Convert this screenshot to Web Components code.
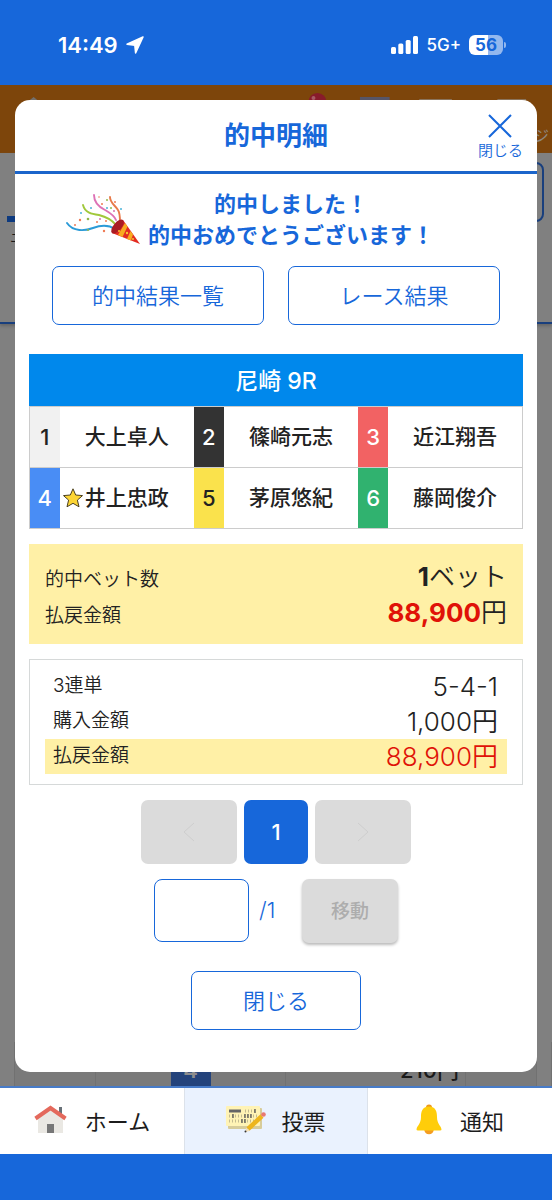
<!DOCTYPE html>
<html lang="ja">
<head>
<meta charset="utf-8">
<meta name="viewport" content="width=device-width, initial-scale=1">
<title>的中明細</title>
<style>
  :root {
    --blue: #1767da;
    --line: #d6d9d9;
    --yellow: #fff0a6;
    --disabled: #dbdbdb;
  }
  body {
    margin: 0;
    min-height: 100vh;
    display: flex;
    flex-direction: column;
    font-family: Inter, "Noto Sans CJK JP", sans-serif;
    color: #222;
    background: var(--blue);
  }
  main { flex: 1; display: grid; grid-template-columns: minmax(0, 1fr); }
  main > * { grid-area: 1 / 1; }
</style>
</head>
<body>
  <status-bar time="14:49" network="5G+" battery="56"></status-bar>
  <main>
    <page-backdrop></page-backdrop>
    <app-dialog heading="的中明細">
      <hit-message>
        <span>的中しました！</span>
        <span>的中おめでとうございます！</span>
      </hit-message>
      <button-row>
        <outline-button>的中結果一覧</outline-button>
        <outline-button>レース結果</outline-button>
      </button-row>
      <race-table heading="尼崎 9R" racers="大上卓人,篠崎元志,近江翔吾,井上忠政,茅原悠紀,藤岡俊介" star="4"></race-table>
      <hit-summary>
        <amount-row label="的中ベット数" amount="1" unit="ベット" strong></amount-row>
        <amount-row label="払戻金額" amount="88,900" unit="円" strong red></amount-row>
      </hit-summary>
      <bet-detail>
        <amount-row label="3連単" amount="5-4-1" inset></amount-row>
        <amount-row label="購入金額" amount="1,000" unit="円" inset></amount-row>
        <amount-row label="払戻金額" amount="88,900" unit="円" inset marked></amount-row>
      </bet-detail>
      <page-navigator page="1" total="1"></page-navigator>
      <outline-button slot="footer">閉じる</outline-button>
    </app-dialog>
  </main>
  <tab-bar></tab-bar>

<script>
const define = (name, render) => customElements.define(name, class extends HTMLElement {
  connectedCallback() {
    if (this.shadowRoot) return;
    this.attachShadow({ mode: "open" }).innerHTML = render(this);
  }
});
const attr = (el, name) => el.getAttribute(name) || "";

define("status-bar", el => `
  <style>
    :host { display: flex; box-sizing: border-box; height: 85px; padding: 5px 46px 0 58px; align-items: center;
      justify-content: space-between; background: var(--blue); color: #fff; }
    div { display: flex; align-items: center; }
    .left { gap: 8px; font-size: 22px; font-weight: 600; }
    .right { gap: 8px; font-size: 17px; font-weight: 500; }
    .battery { gap: 1px; }
    .cell { width: 34px; height: 20px; border-radius: 6px; justify-content: center; color: var(--blue);
      font-size: 17px; font-weight: 700; background: linear-gradient(90deg, #fff 56%, #94b8ee 56%); }
    .nub { width: 2px; height: 6px; border-radius: 0 2px 2px 0; background: #94b8ee; }
  </style>
  <div class="left"><span>${attr(el, "time")}</span>
    <svg width="18" height="18" viewBox="0 0 18 18" fill="#fff" stroke="#fff" stroke-width="1.500" stroke-linejoin="round"><path d="M17 1 1 8.200 8.800 9.200 9.600 17Z"/></svg>
  </div>
  <div class="right">
    <svg width="27" height="18" viewBox="0 0 27 18" fill="#fff"><rect y="11" width="5" height="7" rx="1.500"/><rect x="7.300" y="7.500" width="5" height="10.500" rx="1.500"/><rect x="14.700" y="4" width="5" height="14" rx="1.500"/><rect x="22" width="5" height="18" rx="1.500"/></svg>
    <span>${attr(el, "network")}</span>
    <div class="battery"><div class="cell">${attr(el, "battery")}</div><div class="nub"></div></div>
  </div>`);

define("page-backdrop", () => `
  <style>
    :host { display: flex; flex-direction: column; overflow: hidden; background: #808080; color: #1a1a1a; }
    header { display: flex; height: 68px; background: #7d450b; justify-content: space-between; }
    .my { align-self: flex-end; font-size: 15px; line-height: 34px; color: #8f8880; padding-right: 3px; }
    section { height: 169px; border-bottom: 2px solid #193f7d; box-shadow: 0 2px 3px #666; }
    .top { display: flex; justify-content: space-between; align-items: flex-end; padding: 9px 8px 0 7px; }
    .bar { width: 80px; height: 6px; background: #0d3a7f; }
    .box { width: 110px; height: 56px; border: 2px solid #193f7d; border-radius: 8px; }
    p { margin: 0; padding-left: 10px; font-size: 13px; line-height: 30px; }
    .grow { flex: 1; }
    .row { display: grid; grid-template-columns: 15px 81px 190px 180px 71px 1fr; height: 44px; font-size: 22px; line-height: 56px; background: #7a7a7a; }
    .row > * { border-right: 1px solid #717171; }
    .row > :first-child, .row > :last-child { background: #808080; }
    .num { display: flex; justify-content: center; }
    .num b { width: 40px; background: #24437b; color: #8d8d8d; text-align: center; font-weight: 600; }
    .price { text-align: right; padding-right: 6px; font-weight: 500; }
  </style>
  <header>
    <svg width="540" height="16" viewBox="0 0 540 16"><path d="M29 16l5-4 5 4z" fill="#74706c"/><circle cx="321" cy="17" r="9" fill="#881b2b"/><circle cx="317" cy="13" r="2" fill="#a65a64"/><path d="M364 12h30v4h-30z" fill="#565568"/><path d="M424 14h33v2h-33zM503 14h29v2h-29z" fill="#8a745c"/></svg>
    <span class="my">ジ</span>
  </header>
  <section><div class="top"><div class="bar"></div><div class="box"></div></div><p>ニ</p></section>
  <div class="grow"></div>
  <div class="row"><span></span><span></span><span class="num"><b>4</b></span><span class="price">210円</span><span></span><span></span></div>`);

define("app-dialog", el => `
  <style>
    :host { display: flex; flex-direction: column; margin: 15px 15px 14px; border-radius: 15px; background: #fff; position: relative; }
    header { display: grid; grid-template-columns: 1fr auto 1fr; align-items: center; height: 71px; border-bottom: 3px solid #1b65cb; color: var(--blue); }
    h1 { grid-column: 2; margin: 0; font-size: 26px; font-weight: 700; line-height: 40px; }
    button { justify-self: end; display: flex; flex-direction: column; align-items: center; gap: 2px; margin: 2px 14px 0 0; padding: 0;
      border: 0; background: none; color: inherit; font: 350 15px/20px "Noto Sans CJK JP", sans-serif; }
    .body { display: flex; flex-direction: column; gap: 15px; padding: 15px 14px 28px; }
    footer { display: flex; justify-content: center; padding-bottom: 42px; }
    footer ::slotted(*) { width: 170px; }
  </style>
  <header><h1 id="t">${attr(el, "heading")}</h1>
    <button type="button"><svg width="24" height="24" viewBox="0 0 24 24" fill="none" stroke="currentColor" stroke-width="2"><path d="M1 1 23 23M23 1 1 23"/></svg>閉じる</button>
  </header>
  <div class="body" role="dialog" aria-labelledby="t"><slot></slot></div>
  <footer><slot name="footer"></slot></footer>`);

define("hit-message", () => `
  <style>
    :host { display: flex; justify-content: center; gap: 4px; padding-right: 52px; color: var(--blue); }
    p { display: flex; flex-direction: column; align-items: center; margin: 0; font-size: 22px; font-weight: 700; line-height: 31px; white-space: nowrap; }
    svg { flex: none; margin-top: 4px; }
  </style>
  <svg width="78" height="54" viewBox="0 0 78 54" fill="none">
    <g stroke-width="1.900" stroke-linecap="round">
      <path d="M1 30C7 39 19 38 27 35 35 32 43 32 49 36" stroke="#2c9bd7"/>
      <path d="M17 12C19 20 26 21 33 22 41 24 46 27 50 32" stroke="#a1c83b"/>
      <path d="M28 2C28 10 33 14 39 17 44 20 48 22 50 27" stroke="#dd72b5"/>
      <path d="M44 4C44 10 49 12 52 17 54 20 54 25 54 29" stroke="#e87a49"/>
    </g>
    <path d="M57 27 74 51 46 40Z" fill="#e32b21"/>
    <path d="M52 42 59 30 61.500 33.500 56.500 44Z M61 46 64.500 38 67 41.500 65 47.500Z" fill="#f7ab1f"/>
    <ellipse cx="51.500" cy="33.500" rx="8.500" ry="4" transform="rotate(-50 51.500 33.500)" fill="#a91c22"/>
    <g fill="#f8c531"><circle cx="53" cy="38" r="1"/><circle cx="61" cy="40" r="1.200"/><circle cx="67" cy="46" r="1"/></g>
    <g fill="#ef7b55"><circle cx="14" cy="27" r="1.200"/><circle cx="9" cy="32" r="1"/><circle cx="31" cy="29" r="1"/><circle cx="40" cy="28" r="1"/><circle cx="36" cy="11" r="1"/><circle cx="49" cy="9" r="1"/><circle cx="38" cy="38" r="1.200"/><circle cx="33" cy="4" r=".8"/></g>
    <g fill="#4ab3d9"><circle cx="15" cy="20" r="1"/><circle cx="25" cy="15" r="1"/><circle cx="41" cy="15" r="1"/><circle cx="55" cy="16" r="1"/></g>
    <g fill="#93b848"><circle cx="22" cy="26" r="1.300"/><circle cx="45" cy="15" r="1"/><circle cx="41" cy="7" r="1"/><circle cx="22" cy="37" r="1"/></g>
    <g fill="#d970ae"><circle cx="34" cy="26" r="1"/><circle cx="48" cy="18" r="1"/></g>
  </svg>
  <p><slot></slot></p>`);

define("button-row", () => `
  <style>
    :host { display: grid; grid-template-columns: 1fr 1fr; gap: 24px; padding: 0 23px; margin-bottom: 14px; }
  </style><slot></slot>`);

define("outline-button", () => `
  <style>
    :host { display: block; }
    button { display: block; width: 100%; padding: 11px 0 14px; border: 1px solid var(--blue); border-radius: 7px; background: #fff;
      color: var(--blue); font: 350 22px/32px "Noto Sans CJK JP", sans-serif; }
  </style><button type="button"><slot></slot></button>`);

define("race-table", el => {
  const skins = ["#f1f1f1;color:#222", "#333;color:#fff", "#f26263;color:#fff", "#498df5;color:#fff", "#fae24c;color:#222", "#30b26f;color:#fff"];
  const star = `<svg width="22" height="20" viewBox="0 0 22 20"><path d="M10 .8 12.700 7 19.500 7.600 14.400 12.100 16 18.800 10 15.300 4 18.800 5.600 12.100 .5 7.600 7.300 7Z" fill="#fcd535" stroke="#4b4020" stroke-linejoin="round"/></svg>`;
  const cells = attr(el, "racers").split(",").map((name, i) =>
    `<th scope="row" style="background:${skins[i]}">${i + 1}</th><td><div><i>${attr(el, "star") == i + 1 ? star : ""}</i>${name}</div></td>`);
  return `
  <style>
    :host { display: block; }
    table { width: 100%; border-collapse: collapse; table-layout: fixed; border: 1px solid #ccc; }
    col.n { width: 30px; }
    thead th { height: 51px; padding: 0; background: #0088ec; color: #fff; font-size: 23px; font-weight: 500; line-height: 30px; }
    thead { border: 1px solid #0088ec; }
    tbody tr { border-top: 1px solid #ccc; }
    tbody th, td { height: 60px; padding: 0; }
    tbody th { font-size: 22px; font-weight: 500; }
    td div { display: grid; grid-template-columns: 1fr auto 1fr; font-size: 21px; font-weight: 500; line-height: 30px; white-space: nowrap; }
    i { display: flex; align-items: center; justify-content: flex-end; }
  </style>
  <table><colgroup><col class="n"><col><col class="n"><col><col class="n"><col></colgroup>
    <thead><tr><th colspan="6">${attr(el, "heading")}</th></tr></thead>
    <tbody><tr>${cells.slice(0, 3).join("")}</tr><tr>${cells.slice(3).join("")}</tr></tbody>
  </table>`;
});

define("hit-summary", () => `
  <style>:host { display: block; padding: 15px 16px 13px; background: var(--yellow); }</style><slot></slot>`);

define("bet-detail", () => `
  <style>:host { display: block; padding: 9px 15px 10px; border: 1px solid var(--line); }</style><slot></slot>`);

define("amount-row", el => `
  <style>
    :host { display: flex; justify-content: space-between; align-items: baseline; height: 36px; font-weight: 350; line-height: 36px; }
    :host([inset]) { height: 35px; line-height: 33px; align-items: flex-start; padding: 0 9px 0 8px; }
    :host([marked]) { background: var(--yellow); }
    :host([marked]) .value, :host([red]) b { color: #e01208; }
    .label { font-size: 19px; }
    .value { font-size: 26px; }
    :host([inset]) .value { line-height: 35px; }
    b { font-weight: 350; }
    :host([strong]) b { font-weight: 700; }
  </style>
  <span class="label">${attr(el, "label")}</span><span class="value"><b>${attr(el, "amount")}</b>${attr(el, "unit")}</span>`);

define("page-navigator", el => `
  <style>
    :host { display: flex; flex-direction: column; gap: 15px; }
    nav, form { display: flex; justify-content: center; align-items: flex-start; gap: 7px; margin: 0; }
    button { box-sizing: border-box; width: 96px; height: 64px; padding: 0; border: 0; border-radius: 7px; background: var(--disabled);
      display: grid; place-items: center; color: #cecece; font: 500 22px/30px Inter, sans-serif; }
    .now { width: 64px; background: var(--blue); color: #fff; }
    form { gap: 0; color: var(--blue); }
    input { box-sizing: border-box; width: 95px; height: 63px; border: 1px solid var(--blue); border-radius: 8px; background: #fff; text-align: center; font: 22px Inter, sans-serif; }
    label { width: 43px; padding-left: 10px; font-size: 22px; font-weight: 350; line-height: 63px; }
    .go { color: #adadad; font: 500 19px/30px "Noto Sans CJK JP", sans-serif; box-shadow: 0 2px 3px #bbb; padding-bottom: 3px; }
  </style>
  <nav aria-label="ページ">
    <button type="button" disabled aria-label="前へ"><svg width="14" height="20" fill="none" stroke="currentColor"><path d="M12 1 2 10l10 9"/></svg></button>
    <button type="button" class="now">${attr(el, "page")}</button>
    <button type="button" disabled aria-label="次へ"><svg width="14" height="20" fill="none" stroke="currentColor"><path d="m2 1 10 9-10 9"/></svg></button>
  </nav>
  <form><input id="p" type="text" inputmode="numeric"><label for="p">/${attr(el, "total")}</label><button type="button" class="go" disabled>移動</button></form>`);

define("tab-bar", () => `
  <style>
    :host { display: block; border-top: 2px solid #477bc8; padding-bottom: 47px; background: var(--blue); }
    nav { display: grid; grid-template-columns: repeat(3, 1fr); height: 66px; background: #fff; }
    a { box-sizing: border-box; display: flex; align-items: center; justify-content: center; gap: 18px; padding-bottom: 3px; color: #1c1c1c; text-decoration: none;
      font: 400 22px/32px "Noto Sans CJK JP", sans-serif; }
    a[aria-current] { gap: 15px; background: #eaf2fe; box-shadow: inset 1px 0 #dce2ea, inset -1px 0 #dce2ea; }
  </style>
  <nav>
    <a href="#home"><svg width="33" height="30" viewBox="0 0 33 30"><path d="M25 2h3v9h-3z" fill="#687077"/><path d="M4 12 16.500 4 29 12v16H4z" fill="#eae8e3"/><path d="M1.500 13.500 16.500 3l15 10.500" fill="none" stroke="#e4695c" stroke-width="4"/><path d="M13 19h7v9h-7z" fill="#777"/></svg>ホーム</a>
    <a href="#vote" aria-current="page"><svg width="40" height="28" viewBox="0 0 40 28">
      <rect x="2" y="2" width="34" height="21" rx="1" fill="#d7cc9a"/><rect width="34" height="20" rx="1" fill="#fff3b5"/>
      <path d="M3 5h12" stroke="#666" stroke-width="3"/>
      <path d="M19 5h12M3 10h28M3 15h28" stroke="#c4bb90" stroke-width="3" stroke-dasharray="1 2"/>
      <path d="M29 3v4M7 8v4M19 8v4M22 8v4M25 8v4M16 13v4M19 13v4" stroke="#555" stroke-width="1.300"/>
      <path d="M36 10 22 23" stroke="#edb51d" stroke-width="4.500"/><path d="m20 21.500 3.500 3.500-4 1z" fill="#f5dfb3"/><circle cx="19.500" cy="25.500" r="1" fill="#333"/><circle cx="37.500" cy="8.500" r="2.300" fill="#e97872"/></svg>投票</a>
    <a href="#notice"><svg width="26" height="31" viewBox="0 0 26 31"><circle cx="13" cy="3.500" r="3" fill="#ed981b"/><circle cx="13" cy="25.500" r="4.800" fill="#f49d20"/><path d="M13 2.500C6 2.500 5 8 5 13 5 20 1 21.500 .5 25.500Q.5 26.500 2 26.500H24Q25.500 26.500 25.500 25.500C25 21.500 21 20 21 13 21 8 20 2.500 13 2.500Z" fill="#ffcd0a"/></svg>通知</a>
  </nav>`);
</script>
</body>
</html>
